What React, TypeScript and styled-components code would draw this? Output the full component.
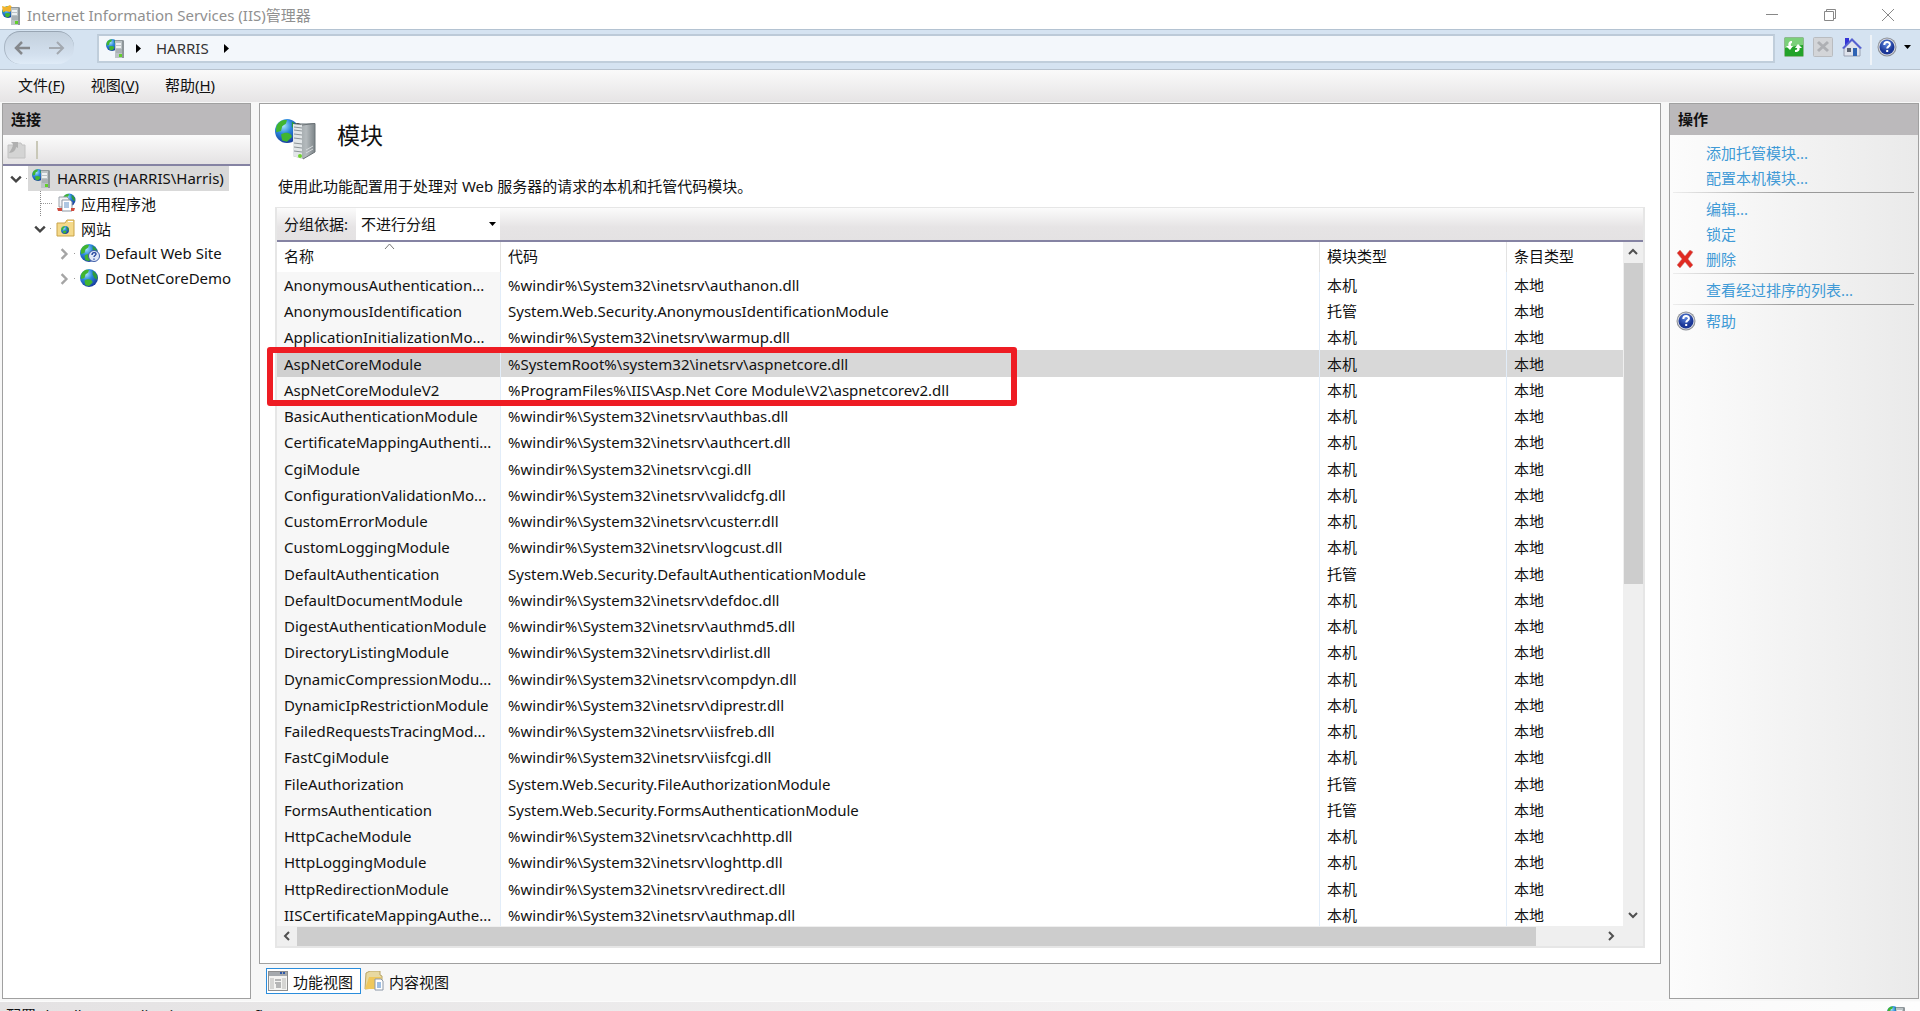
import React from "react";
import styled, { createGlobalStyle, css } from "styled-components";

const Global = createGlobalStyle`
  *, *::before, *::after { box-sizing: border-box; }
  body { margin: 0; overflow: hidden; background: #f7f7f7; }
  body, button, select { font-family: "Noto Sans", "Noto Sans CJK SC", sans-serif; font-size: 15px; color: #111; }
  button, select { border: 0; padding: 0; background: none; }
  a { text-decoration: none; }
  svg { display: block; flex: none; }
`;

const Window = styled.div`
  height: 100vh;
  display: grid;
  grid-template-rows: 29px 41px 32px minmax(0, 1fr) 10px;
  overflow: hidden;
`;

const TitleBar = styled.header`
  display: flex;
  align-items: center;
  background: #fff;
  color: #909090;
  padding: 0 3px 0 2px;
  gap: 5px;
`;
const Title = styled.h1`
  margin: 0;
  flex: 1;
  font-size: 15px;
  font-weight: 400;
  line-height: 28px;
`;
const CaptionButtons = styled.div`
  display: flex;
`;
const CaptionButton = styled.button`
  width: 58px;
  height: 28px;
  display: grid;
  place-items: center;
`;

const AddressBar = styled.nav`
  display: flex;
  align-items: center;
  background: #d5e3f1;
  border-top: 1px solid #b4c3d2;
  border-bottom: 1px solid #b7c2ce;
  padding: 0 6px 0 4px;
`;
const HistoryButtons = styled.div`
  display: flex;
  align-items: center;
  width: 70px;
  height: 33px;
  margin-bottom: 4px;
  border-radius: 16px;
  background: linear-gradient(#c3d0dd, #d3e0ee 70%, #dfebf7);
  border-top: 1px solid #98a5b3;
  border-left: 1px solid #a9b6c4;
`;
const HistoryButton = styled.button`
  flex: 1;
  display: grid;
  place-items: center;
`;
const Crumbs = styled.div`
  flex: 1;
  height: 29px;
  margin: 0 4px 3px 23px;
  display: flex;
  align-items: center;
  gap: 10px;
  padding: 0 7px;
  background: #f3f7fb;
  border: 2px solid #c0cedb;
  border-top-color: #bccad8;
`;
const Crumb = styled.button`
  padding: 0 5px;
  color: #333;
  line-height: 20px;
`;
const ToolButton = styled.button`
  width: 29px;
  height: 24px;
  display: grid;
  place-items: center;
  margin-bottom: 6px;
`;
const HelpGroup = styled.div`
  display: flex;
  border-left: 2px solid #eef3f8;
  margin: 0 0 0 4px;
`;
const DropButton = styled.button`
  width: 13px;
  height: 24px;
  display: grid;
  place-items: center;
`;

const MenuBar = styled.nav`
  display: flex;
  align-items: center;
  gap: 26px;
  padding-left: 18px;
  background: linear-gradient(#fafafa, #e6e4e5);
`;
const MenuItem = styled.button`
  line-height: 24px;
  padding-bottom: 2px;
`;

const Workspace = styled.main`
  display: grid;
  grid-template-columns: 249px minmax(0, 1fr) 250px;
  gap: 8px;
  padding: 1px 1px 2px 2px;
  min-height: 0;
`;

const pane = css`
  border: 1px solid #a0a0a0;
  display: flex;
  flex-direction: column;
  min-height: 0;
`;
const Connections = styled.aside`
  ${pane}
  background: #fff;
`;
const Actions = styled.aside`
  ${pane}
  background: linear-gradient(90deg, #fcfcfc, #eaeaea);
`;
const PaneHeader = styled.h2`
  margin: 0;
  height: 31px;
  line-height: 30px;
  padding-left: 8px;
  font-size: 15px;
  font-weight: 700;
  background: #bbb9bb;
`;
const PaneTools = styled.div`
  display: flex;
  align-items: center;
  gap: 10px;
  height: 31px;
  padding-left: 4px;
  background: linear-gradient(#fbfbfb, #e4e2e3);
  border-bottom: 2px solid #8583a3;
`;
const Divider = styled.span`
  width: 2px;
  height: 18px;
  background: #c9c8b8;
`;

const Tree = styled.ul`
  list-style: none;
  margin: 0;
  padding: 0;
`;
const TreeRow = styled.li<{ $depth: number }>`
  display: flex;
  align-items: center;
  height: 25px;
  padding-left: ${(p) => 3 + p.$depth * 24}px;
`;
const Toggle = styled.button`
  width: 20px;
  height: 20px;
  display: grid;
  place-items: center;
`;
const Stub = styled.span<{ $wide?: boolean }>`
  width: ${(p) => (p.$wide ? 12 : 2)}px;
  height: ${(p) => (p.$wide ? 25 : 1)}px;
  margin-left: ${(p) => (p.$wide ? -10 : 0)}px;
  border-left: ${(p) => (p.$wide ? "1px dotted #888" : "0")};
  background: repeating-linear-gradient(90deg, #999 0 1px, transparent 1px 2px) 0 50% / 100% 1px no-repeat;
`;
const TreeLabel = styled.span<{ $selected?: boolean }>`
  display: flex;
  align-items: center;
  gap: 5px;
  height: 25px;
  padding: 0 5px 1px 4px;
  white-space: nowrap;
  background: ${(p) => (p.$selected ? "#d9d9d9" : "transparent")};
`;

const Center = styled.div`
  display: flex;
  flex-direction: column;
  min-height: 0;
`;
const Feature = styled.section`
  ${pane}
  flex: 1;
  background: #fff;
  padding: 14px 15px 15px 15px;
`;
const FeatureHead = styled.div`
  display: flex;
  align-items: flex-start;
  gap: 20px;
  height: 55px;
`;
const FeatureTitle = styled.h2`
  margin: 0;
  font-size: 23px;
  line-height: 34px;
  font-weight: 400;
`;
const Description = styled.p`
  margin: 0;
  padding-left: 3px;
  height: 34px;
  line-height: 26px;
`;
const ListFrame = styled.div`
  position: relative;
  flex: 1;
  min-height: 0;
  display: grid;
  grid-template-rows: 34px minmax(0, 1fr) 20px;
  grid-template-columns: minmax(0, 1fr) 20px;
  border: 2px solid #e6e6e6;
  border-top-width: 1px;
  background: #efefef;
`;
const GroupBar = styled.div`
  grid-column: 1 / -1;
  display: flex;
  align-items: stretch;
  padding-left: 7px;
  background: linear-gradient(#fbfbfb, #e6e4e5 60%, #e4e2e3);
  border-bottom: 2px solid #8583a3;
`;
const GroupLabel = styled.label`
  width: 72px;
  line-height: 32px;
`;
const SelectWrap = styled.div`
  display: grid;
  align-items: center;
  width: 144px;
  background: #fff;
  & > * { grid-area: 1 / 1; }
  & > svg { justify-self: end; margin-right: 4px; pointer-events: none; }
`;
const Select = styled.select`
  appearance: none;
  height: 32px;
  padding-left: 5px;
`;
const ListView = styled.div`
  overflow: hidden;
  background: #fff;
`;
const Table = styled.table`
  width: 100%;
  table-layout: fixed;
  border-collapse: separate;
  border-spacing: 0;
`;
const Col = styled.col<{ $w?: string }>`
  width: ${(p) => p.$w ?? "auto"};
`;
const HeadCell = styled.th`
  position: relative;
  height: 30px;
  padding: 0 0 3px 7px;
  text-align: left;
  font-weight: 400;
  line-height: 20px;
  vertical-align: middle;
  border-right: 1px solid #e3e3e3;
  &:last-child { border-right: 0; }
`;
const SortMark = styled.svg`
  position: absolute;
  top: 1px;
  left: calc(50% - 5px);
`;
const Row = styled.tr<{ $selected?: boolean }>`
  height: 26px;
  &:nth-child(4n) { height: 27px; }
  background: ${(p) => (p.$selected ? "#d8d8d8" : "transparent")};
  & > td:first-child { background: ${(p) => (p.$selected ? "#d0d0d0" : "#f7f7f7")}; }
`;
const Cell = styled.td`
  padding: 0 0 0 7px;
  line-height: 22px;
  white-space: nowrap;
  border-right: 1px solid #e2edf9;
  &:last-child { border-right: 0; }
`;
const VScroll = styled.div`
  display: grid;
  grid-template-rows: 21px minmax(0, 1fr) 21px;
  justify-items: center;
`;
const HScroll = styled.div`
  grid-column: 1 / -1;
  display: grid;
  grid-template-columns: 20px minmax(0, 1fr) 42px;
`;
const ScrollButton = styled.button`
  width: 20px;
  height: 20px;
  display: grid;
  place-items: center;
`;
const VThumb = styled.div`
  width: 19px;
  height: 50%;
  background: #cdcdcd;
`;
const HThumb = styled.div`
  width: 95%;
  height: 19px;
  align-self: end;
  background: #cdcdcd;
`;
const Highlight = styled.div`
  position: absolute;
  left: -10px;
  top: 139px;
  width: 750px;
  height: 59px;
  border: 6px solid #ee1c23;
  border-radius: 3px;
  pointer-events: none;
`;

const ViewTabs = styled.div`
  display: flex;
  gap: 2px;
  height: 35px;
  padding: 4px 0 0 7px;
`;
const ViewTab = styled.button<{ $active?: boolean }>`
  display: flex;
  align-items: center;
  gap: 5px;
  height: 26px;
  padding: 0 ${(p) => (p.$active ? 7 : 1)}px 0 1px;
  border: ${(p) => (p.$active ? "1px solid #2a8ddc" : "0")};
  background: ${(p) => (p.$active ? "#fff" : "transparent")};
`;

const ActionGroup = styled.ul`
  list-style: none;
  margin: 0 4px 0 3px;
  padding: 3px 0 2px;
  &:first-of-type { padding-top: 5px; }
  & + & { border-top: 1px solid; border-image: linear-gradient(90deg, #eee, #999 50%, #999) 1; }
`;
const ActionItem = styled.li`
  display: grid;
  grid-template-columns: 20px 1fr;
  column-gap: 10px;
  align-items: center;
  height: 25px;
  padding-left: 3px;
`;
const ActionLink = styled.a`
  grid-column: 2;
  color: #3f9ad6;
  line-height: 24px;
`;

const StatusBar = styled.footer`
  display: flex;
  justify-content: space-between;
  align-items: flex-start;
  overflow: hidden;
  padding: 3px 13px 0 6px;
  line-height: 20px;
  background: linear-gradient(90deg, #e4e2e3, #fdfdfd);
  border-top: 1px solid #fbfbfb;
`;

const Globe = ({ cx, cy, r, id }: { cx: number; cy: number; r: number; id: string }) => (
  <g>
    <defs>
      <radialGradient id={id} cx="35%" cy="28%" r="75%">
        <stop offset="0" stopColor="#a9e6fb" />
        <stop offset="0.45" stopColor="#2b86dc" />
        <stop offset="1" stopColor="#173b9c" />
      </radialGradient>
    </defs>
    <circle cx={cx} cy={cy} r={r} fill={`url(#${id})`} />
    <g transform={`translate(${cx} ${cy}) scale(${r / 10})`} fill="#41b52f">
      <path d="M-9-3C-8-8-3-10 0-9L-1-6-4-4-5 0-9 1Z" />
      <path d="M-5 3C-1 0 4 2 4 5L0 9-4 8Z" />
      <path d="M4-8C8-6 10-2 9 2L6 0 4-4Z" fill="#2d9c3c" />
    </g>
  </g>
);

const LargeServerIcon = () => (
  <svg width="42" height="42" viewBox="0 0 42 42" aria-hidden="true">
    <defs>
      <linearGradient id="tower">
        <stop offset="0" stopColor="#8f979b" />
        <stop offset="0.6" stopColor="#b4babd" />
        <stop offset="1" stopColor="#7c8488" />
      </linearGradient>
    </defs>
    <Globe cx={12} cy={13} r={12} id="featureGlobe" />
    <path d="M18 6L27 5 40 5V34L28 41 18 38Z" fill="url(#tower)" />
    <path d="M18 6L27 7V41L18 38Z" fill="#e2e6e8" />
    <path d="M19 9l8 1M19 12l8 1M19 16l8 1M19 20l8 1M19 25l8 1M19 29l8 1M19 33l8 1" stroke="#8b9296" />
    <path d="M27 7L40 5.500V34L28 41" fill="none" stroke="#6b7276" />
    <path d="M31 35L38 31M31 32L38 28" stroke="#d5d9db" />
    <path d="M18 6L23 5 27 6.500Z" fill="#3a3f42" />
    <circle cx="25" cy="38" r="2" fill="#6fd32e" />
  </svg>
);

const ServerIcon = ({ id, star }: { id: string; star?: boolean }) => (
  <svg width="20" height="20" viewBox="0 0 20 20" aria-hidden="true">
    <Globe cx={6} cy={7} r={6} id={id} />
    {star && <path d="M0 1L4 2 8 0 11 3 8 7 4 6 1 7Z" fill="#f2b32c" />}
    <path d="M9 2h8l1 1v17H9Z" fill="#bcc3c6" />
    <path d="M9 2h8l1 1H9Z" fill="#8f979b" />
    <path d="M10 5h5v2h-5ZM10 8h5v2h-5Z" fill="#eef1f2" />
    <path d="M10 12h6M10 14h6" stroke="#98a0a4" />
    <path d="M17 3v17" stroke="#7f878b" strokeWidth="1.500" />
    <rect x="13" y="16" width="3" height="3" fill="#62d02a" />
  </svg>
);

const GlobeIcon = ({ id, help }: { id: string; help?: boolean }) => (
  <svg width="20" height="20" viewBox="0 0 20 20" aria-hidden="true">
    <Globe cx={9} cy={10} r={9} id={id} />
    {help && (
      <g>
        <circle cx="14" cy="13" r="5.5" fill="#dfe8f8" stroke="#3d5ba8" />
        <path d="M12 12c0-3 4-3 4-1 0 1.500-2 1.500-2 3M14 15.500v1.200" fill="none" stroke="#2747a0" strokeWidth="1.400" />
      </g>
    )}
  </svg>
);

const HelpIcon = ({ id }: { id: string }) => (
  <svg width="20" height="20" viewBox="0 0 20 20" aria-hidden="true">
    <defs>
      <radialGradient id={id} cx="45%" cy="30%">
        <stop offset="0" stopColor="#5b86e0" />
        <stop offset="1" stopColor="#1b3797" />
      </radialGradient>
    </defs>
    <circle cx="10" cy="10" r="9.500" fill="#8c8f96" />
    <circle cx="10" cy="10" r="8.500" fill="#d7dae0" />
    <circle cx="10" cy="10" r="7.500" fill={`url(#${id})`} />
    <path d="M7.300 8c0-4 5.600-3.600 5.600-.6 0 2-2.700 2-2.700 4.200M10.200 13v2" fill="none" stroke="#fff" strokeWidth="2" />
  </svg>
);

const Chevron = ({ dir, color = "#505050", size = 10 }: { dir: "up" | "down" | "left" | "right"; color?: string; size?: number }) => {
  const d = { up: "M1 7L5 3 9 7", down: "M1 3L5 7 9 3", left: "M7 1L3 5 7 9", right: "M3 1L7 5 3 9" }[dir];
  return (
    <svg width={size} height={size} viewBox="0 0 10 10" aria-hidden="true">
      <path d={d} fill="none" stroke={color} strokeWidth="2" />
    </svg>
  );
};
const CrumbArrow = () => (
  <svg width="5" height="9" viewBox="0 0 5 9" aria-hidden="true"><path d="M0 0L5 4.500 0 9Z" fill="#000" /></svg>
);
const DropArrow = () => (
  <svg width="7" height="4" viewBox="0 0 7 4" aria-hidden="true"><path d="M0 0H7L3.500 4Z" fill="#000" /></svg>
);

const PoolIcon = () => (
  <svg width="20" height="20" viewBox="0 0 20 20" aria-hidden="true">
    <Globe cx={13} cy={7} r={6.5} id="pool" />
    <path d="M3 4h8l2 2v8H3Z" fill="#f3f5f7" stroke="#9aa2ab" />
    <path d="M6 7h8l2 2v9H6Z" fill="#fff" stroke="#8d97a3" />
    <path d="M8 10h5M8 12h5M8 14h5" stroke="#5d8fc4" />
    <path d="M1 15h5v3H2ZM15 15h4l-1 3h-3Z" fill="#cf4b3e" />
  </svg>
);
const SitesIcon = () => (
  <svg width="20" height="20" viewBox="0 0 20 20" aria-hidden="true">
    <path d="M1 5h8l2-3h7v16H1Z" fill="#f4d98a" stroke="#c9a348" />
    <path d="M12 3h5v1h-5Z" fill="#fff" />
    <Globe cx={9} cy={12} r={4} id="sites" />
  </svg>
);
const ConnectIcon = () => (
  <svg width="19" height="18" viewBox="0 0 19 18" aria-hidden="true">
    <path d="M1 4h6l1-2h6l1 2h3v13H1Z" fill="#d4d4d4" stroke="#c2c2c2" />
    <path d="M2 12C6 12 9 9 9 6L11 7V1H4L6 3C6 6 4 9 2 12Z" fill="#b0b0b0" />
  </svg>
);
const RefreshIcon = () => (
  <svg width="20" height="20" viewBox="0 0 20 20" aria-hidden="true">
    <rect x="0.5" y="0.5" width="19" height="19" rx="1" fill="#22a32a" stroke="#8fb890" />
    <path d="M1 1h18v7C12 8 8 11 1 11Z" fill="#7bd07a" />
    <path d="M8 4C5 4 4 6 4.500 9H2L6 13 9 9H7C6.500 7 7 6 8 6ZM11 15C15 15 16 13 15.500 11H18L14 7 11 11H13C13.500 12 13 13 11 13Z" fill="#fff" />
  </svg>
);
const StopIcon = () => (
  <svg width="20" height="20" viewBox="0 0 20 20" aria-hidden="true">
    <rect x="0.5" y="0.5" width="19" height="19" rx="1" fill="#d3d5d8" stroke="#b9bcc0" />
    <path d="M5 5L15 14M15 5L5 14" stroke="#aeb0b4" strokeWidth="3" />
  </svg>
);
const HomeIcon = () => (
  <svg width="20" height="20" viewBox="0 0 20 20" aria-hidden="true">
    <path d="M3 1h4v7H3Z" fill="#3434d6" />
    <path d="M2 10L10 3 18 10V19H2Z" fill="#dfe3ec" stroke="#9aa1b2" />
    <path d="M0 11L10 1 20 11 18 12 10 4 2 12Z" fill="#5560d0" />
    <path d="M5 11h4v4H5Z" fill="#5b6270" /><path d="M11 11h4v8H11Z" fill="#2f63b4" />
  </svg>
);
const DeleteIcon = () => (
  <svg width="18" height="18" viewBox="0 0 18 18" aria-hidden="true">
    <path d="M1 3L4 0 9 6 14 0 17 2 12 9 17 15 14 18 9 12 4 18 1 15 6 9Z" fill="#e02a22" stroke="#c98a86" strokeWidth="0.5" />
  </svg>
);
const FeatureViewIcon = () => (
  <svg width="20" height="20" viewBox="0 0 20 20" aria-hidden="true">
    <rect x="0.5" y="0.5" width="19" height="19" fill="#f4f4f2" stroke="#8d8d8d" />
    <path d="M1 1h18v4H1Z" fill="#a5a9ad" /><path d="M12 2h2M15 2h2" stroke="#2d58a8" strokeWidth="2" />
    <path d="M2 7h4v11H2ZM14 7h4v11h-4Z" fill="#d5d5d3" />
    <path d="M7 9h6M7 12h6M8 14h5M8 16h5" stroke="#77797b" />
  </svg>
);
const ContentViewIcon = () => (
  <svg width="20" height="20" viewBox="0 0 20 20" aria-hidden="true">
    <path d="M2 2L6 0H16V4L18 5V16L1 18Z" fill="#e8d9a0" stroke="#b9a566" />
    <path d="M5 6H17L14 18H1Z" fill="#efc85c" />
    <path d="M11 8h6l2 2v9h-8Z" fill="#fff" stroke="#8c98a8" />
    <path d="M13 12h4M13 14h4M13 16h4" stroke="#3f7fc8" />
  </svg>
);

const win = (f: string) => `%windir%\\System32\\inetsrv\\${f}.dll`;
const sec = (f: string) => `System.Web.Security.${f}Module`;

const modules: [string, string][] = [
  ["AnonymousAuthentication...", win("authanon")],
  ["AnonymousIdentification", sec("AnonymousIdentification")],
  ["ApplicationInitializationMo...", win("warmup")],
  ["AspNetCoreModule", "%SystemRoot%\\system32\\inetsrv\\aspnetcore.dll"],
  ["AspNetCoreModuleV2", "%ProgramFiles%\\IIS\\Asp.Net Core Module\\V2\\aspnetcorev2.dll"],
  ["BasicAuthenticationModule", win("authbas")],
  ["CertificateMappingAuthenti...", win("authcert")],
  ["CgiModule", win("cgi")],
  ["ConfigurationValidationMo...", win("validcfg")],
  ["CustomErrorModule", win("custerr")],
  ["CustomLoggingModule", win("logcust")],
  ["DefaultAuthentication", sec("DefaultAuthentication")],
  ["DefaultDocumentModule", win("defdoc")],
  ["DigestAuthenticationModule", win("authmd5")],
  ["DirectoryListingModule", win("dirlist")],
  ["DynamicCompressionModu...", win("compdyn")],
  ["DynamicIpRestrictionModule", win("diprestr")],
  ["FailedRequestsTracingMod...", win("iisfreb")],
  ["FastCgiModule", win("iisfcgi")],
  ["FileAuthorization", sec("FileAuthorization")],
  ["FormsAuthentication", sec("FormsAuthentication")],
  ["HttpCacheModule", win("cachhttp")],
  ["HttpLoggingModule", win("loghttp")],
  ["HttpRedirectionModule", win("redirect")],
  ["IISCertificateMappingAuthe...", win("authmap")],
];

const menus = [["文件", "F"], ["视图", "V"], ["帮助", "H"]];

export default function App() {
  return (
    <Window>
      <Global />
      <TitleBar>
        <ServerIcon id="app" star />
        <Title>Internet Information Services (IIS)管理器</Title>
        <CaptionButtons>
          <CaptionButton aria-label="最小化">
            <svg width="12" height="12"><path d="M0 5.500H12" stroke="#888" /></svg>
          </CaptionButton>
          <CaptionButton aria-label="还原">
            <svg width="12" height="12"><path d="M.5 2.500h9v9h-9ZM2.500 2.500V.5h9v9h-2" fill="none" stroke="#888" /></svg>
          </CaptionButton>
          <CaptionButton aria-label="关闭">
            <svg width="12" height="12"><path d="M0 0L12 12M12 0L0 12" stroke="#888" /></svg>
          </CaptionButton>
        </CaptionButtons>
      </TitleBar>

      <AddressBar>
        <HistoryButtons>
          <HistoryButton aria-label="后退">
            <svg width="16" height="14"><path d="M16 7H2M8 1L2 7 8 13" fill="none" stroke="#85888c" strokeWidth="2.500" /></svg>
          </HistoryButton>
          <HistoryButton aria-label="前进">
            <svg width="16" height="14"><path d="M0 7H14M8 1L14 7 8 13" fill="none" stroke="#a3a9b0" strokeWidth="2" /></svg>
          </HistoryButton>
        </HistoryButtons>
        <Crumbs>
          <ServerIcon id="crumb" />
          <CrumbArrow />
          <Crumb>HARRIS</Crumb>
          <CrumbArrow />
        </Crumbs>
        <ToolButton aria-label="刷新"><RefreshIcon /></ToolButton>
        <ToolButton aria-label="停止"><StopIcon /></ToolButton>
        <ToolButton aria-label="主页"><HomeIcon /></ToolButton>
        <HelpGroup>
          <ToolButton aria-label="帮助"><HelpIcon id="h1" /></ToolButton>
          <DropButton aria-label="更多"><DropArrow /></DropButton>
        </HelpGroup>
      </AddressBar>

      <MenuBar>
        {menus.map(([name, key]) => (
          <MenuItem key={key}>{name}(<u>{key}</u>)</MenuItem>
        ))}
      </MenuBar>

      <Workspace>
        <Connections>
          <PaneHeader>连接</PaneHeader>
          <PaneTools><ConnectIcon /><Divider /></PaneTools>
          <Tree>
            <TreeRow $depth={0}>
              <Toggle aria-label="折叠"><Chevron dir="down" size={12} color="#444" /></Toggle>
              <Stub />
              <TreeLabel $selected><ServerIcon id="tree" />HARRIS (HARRIS\Harris)</TreeLabel>
            </TreeRow>
            <TreeRow $depth={1}>
              <Toggle as="span" /><Stub $wide /><TreeLabel><PoolIcon />应用程序池</TreeLabel>
            </TreeRow>
            <TreeRow $depth={1}>
              <Toggle aria-label="折叠"><Chevron dir="down" size={12} color="#444" /></Toggle>
              <Stub /><TreeLabel><SitesIcon />网站</TreeLabel>
            </TreeRow>
            <TreeRow $depth={2}>
              <Toggle aria-label="展开"><Chevron dir="right" size={12} color="#a5a5a5" /></Toggle>
              <Stub /><TreeLabel><GlobeIcon id="dws" help />Default Web Site</TreeLabel>
            </TreeRow>
            <TreeRow $depth={2}>
              <Toggle aria-label="展开"><Chevron dir="right" size={12} color="#a5a5a5" /></Toggle>
              <Stub /><TreeLabel><GlobeIcon id="demo" />DotNetCoreDemo</TreeLabel>
            </TreeRow>
          </Tree>
        </Connections>

        <Center>
          <Feature>
            <FeatureHead>
              <LargeServerIcon />
              <FeatureTitle>模块</FeatureTitle>
            </FeatureHead>
            <Description>使用此功能配置用于处理对 Web 服务器的请求的本机和托管代码模块。</Description>
            <ListFrame>
              <GroupBar>
                <GroupLabel htmlFor="group">分组依据:</GroupLabel>
                <SelectWrap>
                  <Select id="group"><option>不进行分组</option></Select>
                  <DropArrow />
                </SelectWrap>
              </GroupBar>
              <ListView>
                <Table>
                  <colgroup>
                    <Col $w="224px" /><Col /><Col $w="187px" /><Col $w="116px" />
                  </colgroup>
                  <thead>
                    <tr>
                      <HeadCell>
                        名称
                        <SortMark width="11" height="7"><path d="M1 6L5.500 1 10 6" fill="none" stroke="#777" /></SortMark>
                      </HeadCell>
                      <HeadCell>代码</HeadCell>
                      <HeadCell>模块类型</HeadCell>
                      <HeadCell>条目类型</HeadCell>
                    </tr>
                  </thead>
                  <tbody>
                    {modules.map(([name, code]) => (
                      <Row key={name} $selected={name === "AspNetCoreModule"}>
                        <Cell>{name}</Cell>
                        <Cell>{code}</Cell>
                        <Cell>{code.startsWith("System.Web") ? "托管" : "本机"}</Cell>
                        <Cell>本地</Cell>
                      </Row>
                    ))}
                  </tbody>
                </Table>
              </ListView>
              <VScroll>
                <ScrollButton aria-label="向上滚动"><Chevron dir="up" /></ScrollButton>
                <VThumb />
                <ScrollButton aria-label="向下滚动"><Chevron dir="down" /></ScrollButton>
              </VScroll>
              <HScroll>
                <ScrollButton aria-label="向左滚动"><Chevron dir="left" /></ScrollButton>
                <HThumb />
                <ScrollButton aria-label="向右滚动"><Chevron dir="right" /></ScrollButton>
              </HScroll>
              <Highlight />
            </ListFrame>
          </Feature>
          <ViewTabs>
            <ViewTab $active><FeatureViewIcon />功能视图</ViewTab>
            <ViewTab><ContentViewIcon />内容视图</ViewTab>
          </ViewTabs>
        </Center>

        <Actions>
          <PaneHeader>操作</PaneHeader>
          <ActionGroup>
            <ActionItem><ActionLink href="#add">添加托管模块...</ActionLink></ActionItem>
            <ActionItem><ActionLink href="#native">配置本机模块...</ActionLink></ActionItem>
          </ActionGroup>
          <ActionGroup>
            <ActionItem><ActionLink href="#edit">编辑...</ActionLink></ActionItem>
            <ActionItem><ActionLink href="#lock">锁定</ActionLink></ActionItem>
            <ActionItem><DeleteIcon /><ActionLink href="#remove">删除</ActionLink></ActionItem>
          </ActionGroup>
          <ActionGroup>
            <ActionItem><ActionLink href="#ordered">查看经过排序的列表...</ActionLink></ActionItem>
          </ActionGroup>
          <ActionGroup>
            <ActionItem><HelpIcon id="h2" /><ActionLink href="#help">帮助</ActionLink></ActionItem>
          </ActionGroup>
        </Actions>
      </Workspace>

      <StatusBar>
        <span>配置:“localhost”applicationHost.config</span>
        <ServerIcon id="status" />
      </StatusBar>
    </Window>
  );
}
